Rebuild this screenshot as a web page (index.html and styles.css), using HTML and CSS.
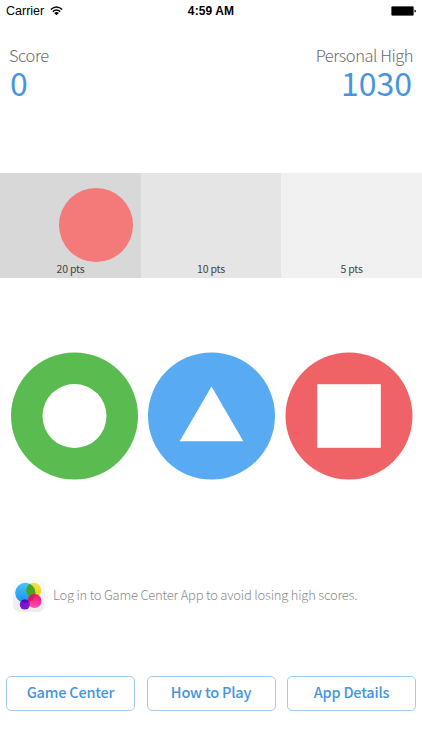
FILE: index.html
```
<!DOCTYPE html>
<html lang="en">
<head>
  <meta charset="utf-8">
  <title>Shapes Game</title>
  <link rel="stylesheet" href="styles.css">
</head>
<body>
  <header class="status-bar">
    <div class="carrier">
      <span>Carrier</span>
      <svg class="wifi" width="13" height="10" viewBox="0 0 13 10">
        <path d="M0.8 3.5 Q6.5 -1.4 12.2 3.5 M2.8 5.6 Q6.5 2.5 10.2 5.6" fill="none" stroke="#000" stroke-width="1.5"/>
        <path d="M4.2 7 Q6.5 5.1 8.8 7 L6.5 9.3Z"/>
      </svg>
    </div>
    <div class="time">4:59 AM</div>
    <svg class="battery" width="31" height="10" viewBox="0 0 31 10">
      <rect x="0.5" y="0.5" width="22" height="9" rx="1" stroke="#555" stroke-width="0.7"/>
      <path d="M23.5 3.5 Q25 4 25 5 Q25 6 23.5 6.5Z"/>
    </svg>
  </header>

  <section class="scores">
    <div class="score">
      <div class="score-label">Score</div>
      <div class="score-value">0</div>
    </div>
    <div class="score score-high">
      <div class="score-label">Personal High</div>
      <div class="score-value">1030</div>
    </div>
  </section>

  <section class="track">
    <div class="zone zone-20">20 pts</div>
    <div class="zone zone-10">10 pts</div>
    <div class="zone zone-5">5 pts</div>
    <div class="ball"></div>
  </section>

  <section class="shapes">
    <svg class="shape" viewBox="0 0 128 128">
      <circle cx="63.5" cy="64" r="63.5" fill="#5abb50"/>
      <circle cx="63.5" cy="64" r="32" fill="#fff"/>
    </svg>
    <svg class="shape" viewBox="0 0 128 128">
      <circle cx="63.5" cy="64" r="63.5" fill="#58aaf3"/>
      <path d="M63.5 34.6 L95.3 89.3 H31.7Z" fill="#fff"/>
    </svg>
    <svg class="shape" viewBox="0 0 128 128">
      <circle cx="64" cy="64" r="63.5" fill="#ef6266"/>
      <rect x="32.2" y="32.2" width="63.6" height="63.6" fill="#fff"/>
    </svg>
  </section>

  <section class="notice">
    <svg class="gc-icon" width="32" height="32" viewBox="0 0 32 32">
      <defs>
        <linearGradient id="tile" x1="0" y1="0" x2="0" y2="1">
          <stop offset="0" stop-color="#fcfcfc"/>
          <stop offset="1" stop-color="#ececec"/>
        </linearGradient>
        <linearGradient id="blue" x1="0" y1="0" x2="0" y2="1">
          <stop offset="0" stop-color="#4fc3f8"/>
          <stop offset="1" stop-color="#1590ee"/>
        </linearGradient>
        <linearGradient id="yellow" x1="0" y1="0" x2="0" y2="1">
          <stop offset="0" stop-color="#f6e04c"/>
          <stop offset="1" stop-color="#f6cf05"/>
        </linearGradient>
        <linearGradient id="pink" x1="0" y1="0" x2="0" y2="1">
          <stop offset="0" stop-color="#f5106a"/>
          <stop offset="1" stop-color="#ff4fb4"/>
        </linearGradient>
        <clipPath id="blue-clip"><circle cx="12.3" cy="12.8" r="10.1"/></clipPath>
      </defs>
      <rect width="32" height="32" rx="7" fill="url(#tile)"/>
      <circle cx="20.7" cy="10.2" r="7.5" fill="url(#yellow)"/>
      <circle cx="12.3" cy="12.8" r="10.1" fill="url(#blue)"/>
      <circle cx="20.7" cy="10.2" r="7.5" fill="#45a51c" clip-path="url(#blue-clip)"/>
      <circle cx="21.5" cy="21" r="7" fill="url(#pink)"/>
      <circle cx="21.5" cy="21" r="7" fill="#d51c63" clip-path="url(#blue-clip)"/>
      <circle cx="11.8" cy="24.6" r="5" fill="#7d16d0"/>
      <path d="M7.8 21.6 A5 5 0 0 1 15.8 21.6 Q12 23.9 7.8 21.6Z" fill="#4b0fb4"/>
    </svg>
    <p class="notice-text">Log in to Game Center App to avoid losing high scores.</p>
  </section>

  <nav class="actions">
    <button class="action" type="button">Game Center</button>
    <button class="action" type="button">How to Play</button>
    <button class="action" type="button">App Details</button>
  </nav>
</body>
</html>
```
FILE: styles.css
```
* {
  box-sizing: border-box;
}

body {
  width: 422px;
  height: 750px;
  margin: 0;
  overflow: hidden;
  background: #fff;
  font-family: "Noto Sans CJK KR", "Noto Sans", sans-serif;
}

.status-bar {
  display: grid;
  grid-template-columns: 1fr auto 1fr;
  align-items: center;
  height: 22px;
  padding-left: 6px;
  font-family: "Liberation Sans", Arial, sans-serif;
  font-size: 12.5px;
  line-height: 22px;
  color: #000;
}

.carrier {
  display: flex;
  align-items: center;
  gap: 6px;
}

.time {
  font-size: 12px;
  font-weight: bold;
  letter-spacing: 0.1px;
  margin-right: 6px;
}

.battery {
  justify-self: end;
}

.scores {
  display: flex;
  justify-content: space-between;
  height: 151px;
  padding: 21px 9px 0;
}

.score-label {
  font-size: 16.5px;
  font-weight: 300;
  line-height: 24px;
  letter-spacing: -0.45px;
  color: #6c6c6c;
}

.score-value {
  padding: 0 1px;
  font-size: 32px;
  line-height: 30px;
  color: #4794e0;
}

.score-high {
  text-align: right;
}

.track {
  position: relative;
  display: grid;
  grid-template-columns: 141px 140px 141px;
  height: 105px;
}

.zone {
  display: flex;
  align-items: flex-end;
  justify-content: center;
  padding-bottom: 1px;
  font-size: 10.5px;
  line-height: 16px;
  letter-spacing: -0.2px;
  color: #444;
}

.zone-20 {
  background: #d8d8d8;
}

.zone-10 {
  background: #e5e5e5;
}

.zone-5 {
  background: #f1f1f1;
}

.ball {
  position: absolute;
  top: 15px;
  left: 59px;
  width: 74px;
  height: 74px;
  border-radius: 50%;
  background: #f47a7a;
}

.shapes {
  display: flex;
  justify-content: space-between;
  padding: 74px 9px 0 11px;
}

.shape {
  width: 128px;
  height: 128px;
}

.shape:first-child {
  margin-left: -0.5px;
}

.notice {
  display: flex;
  gap: 8px;
  height: 33px;
  margin-top: 100px;
  padding-left: 13px;
}

.notice-text {
  margin: 0;
  padding-top: 2px;
  font-size: 13px;
  font-weight: 300;
  line-height: 26px;
  letter-spacing: -0.22px;
  color: #8c8c8c;
}

.actions {
  display: flex;
  justify-content: space-between;
  margin-top: 63px;
  padding: 0 6px;
}

.action {
  width: 129px;
  height: 35px;
  padding: 0 0 4px;
  border: 1px solid #a5caf0;
  border-radius: 5px;
  background: #fff;
  font-family: inherit;
  font-size: 14.5px;
  font-weight: 500;
  letter-spacing: -0.2px;
  color: #4794e0;
}
```
